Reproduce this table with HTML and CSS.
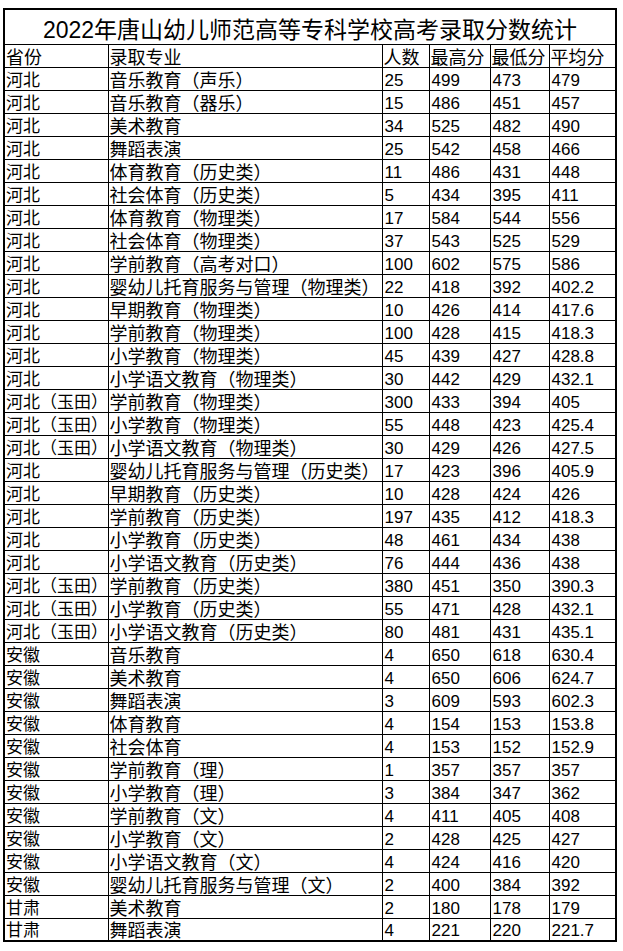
FILE: index.html
```html
<!DOCTYPE html>
<html lang="zh-CN">
<head>
<meta charset="utf-8">
<title>2022年唐山幼儿师范高等专科学校高考录取分数统计</title>
<link rel="stylesheet" href="styles.css">
</head>
<body>
<table class="sheet">
<colgroup>
<col class="c-prov"><col class="c-major"><col class="c-num"><col class="c-max"><col class="c-min"><col class="c-avg">
</colgroup>
<tbody>
<tr class="title-row"><td colspan="6" class="title">2022年唐山幼儿师范高等专科学校高考录取分数统计</td></tr>
<tr class="head"><td>省份</td><td>录取专业</td><td>人数</td><td>最高分</td><td>最低分</td><td>平均分</td></tr>
<tr><td>河北</td><td>音乐教育（声乐）</td><td>25</td><td>499</td><td>473</td><td>479</td></tr>
<tr><td>河北</td><td>音乐教育（器乐）</td><td>15</td><td>486</td><td>451</td><td>457</td></tr>
<tr><td>河北</td><td>美术教育</td><td>34</td><td>525</td><td>482</td><td>490</td></tr>
<tr><td>河北</td><td>舞蹈表演</td><td>25</td><td>542</td><td>458</td><td>466</td></tr>
<tr><td>河北</td><td>体育教育（历史类）</td><td>11</td><td>486</td><td>431</td><td>448</td></tr>
<tr><td>河北</td><td>社会体育（历史类）</td><td>5</td><td>434</td><td>395</td><td>411</td></tr>
<tr><td>河北</td><td>体育教育（物理类）</td><td>17</td><td>584</td><td>544</td><td>556</td></tr>
<tr><td>河北</td><td>社会体育（物理类）</td><td>37</td><td>543</td><td>525</td><td>529</td></tr>
<tr><td>河北</td><td>学前教育（高考对口）</td><td>100</td><td>602</td><td>575</td><td>586</td></tr>
<tr><td>河北</td><td>婴幼儿托育服务与管理（物理类）</td><td>22</td><td>418</td><td>392</td><td>402.2</td></tr>
<tr><td>河北</td><td>早期教育（物理类）</td><td>10</td><td>426</td><td>414</td><td>417.6</td></tr>
<tr><td>河北</td><td>学前教育（物理类）</td><td>100</td><td>428</td><td>415</td><td>418.3</td></tr>
<tr><td>河北</td><td>小学教育（物理类）</td><td>45</td><td>439</td><td>427</td><td>428.8</td></tr>
<tr><td>河北</td><td>小学语文教育（物理类）</td><td>30</td><td>442</td><td>429</td><td>432.1</td></tr>
<tr><td>河北（玉田）</td><td>学前教育（物理类）</td><td>300</td><td>433</td><td>394</td><td>405</td></tr>
<tr><td>河北（玉田）</td><td>小学教育（物理类）</td><td>55</td><td>448</td><td>423</td><td>425.4</td></tr>
<tr><td>河北（玉田）</td><td>小学语文教育（物理类）</td><td>30</td><td>429</td><td>426</td><td>427.5</td></tr>
<tr><td>河北</td><td>婴幼儿托育服务与管理（历史类）</td><td>17</td><td>423</td><td>396</td><td>405.9</td></tr>
<tr><td>河北</td><td>早期教育（历史类）</td><td>10</td><td>428</td><td>424</td><td>426</td></tr>
<tr><td>河北</td><td>学前教育（历史类）</td><td>197</td><td>435</td><td>412</td><td>418.3</td></tr>
<tr><td>河北</td><td>小学教育（历史类）</td><td>48</td><td>461</td><td>434</td><td>438</td></tr>
<tr><td>河北</td><td>小学语文教育（历史类）</td><td>76</td><td>444</td><td>436</td><td>438</td></tr>
<tr><td>河北（玉田）</td><td>学前教育（历史类）</td><td>380</td><td>451</td><td>350</td><td>390.3</td></tr>
<tr><td>河北（玉田）</td><td>小学教育（历史类）</td><td>55</td><td>471</td><td>428</td><td>432.1</td></tr>
<tr><td>河北（玉田）</td><td>小学语文教育（历史类）</td><td>80</td><td>481</td><td>431</td><td>435.1</td></tr>
<tr><td>安徽</td><td>音乐教育</td><td>4</td><td>650</td><td>618</td><td>630.4</td></tr>
<tr><td>安徽</td><td>美术教育</td><td>4</td><td>650</td><td>606</td><td>624.7</td></tr>
<tr><td>安徽</td><td>舞蹈表演</td><td>3</td><td>609</td><td>593</td><td>602.3</td></tr>
<tr><td>安徽</td><td>体育教育</td><td>4</td><td>154</td><td>153</td><td>153.8</td></tr>
<tr><td>安徽</td><td>社会体育</td><td>4</td><td>153</td><td>152</td><td>152.9</td></tr>
<tr><td>安徽</td><td>学前教育（理）</td><td>1</td><td>357</td><td>357</td><td>357</td></tr>
<tr><td>安徽</td><td>小学教育（理）</td><td>3</td><td>384</td><td>347</td><td>362</td></tr>
<tr><td>安徽</td><td>学前教育（文）</td><td>4</td><td>411</td><td>405</td><td>408</td></tr>
<tr><td>安徽</td><td>小学教育（文）</td><td>2</td><td>428</td><td>425</td><td>427</td></tr>
<tr><td>安徽</td><td>小学语文教育（文）</td><td>4</td><td>424</td><td>416</td><td>420</td></tr>
<tr><td>安徽</td><td>婴幼儿托育服务与管理（文）</td><td>2</td><td>400</td><td>384</td><td>392</td></tr>
<tr><td>甘肃</td><td>美术教育</td><td>2</td><td>180</td><td>178</td><td>179</td></tr>
<tr><td>甘肃</td><td>舞蹈表演</td><td>4</td><td>221</td><td>220</td><td>221.7</td></tr>
</tbody>
</table>
</body>
</html>
```
FILE: styles.css
```css
html, body {
  margin: 0;
  padding: 0;
  background: #fff;
}

.sheet {
  margin: 8px 0 0 3px;
  border-collapse: collapse;
  table-layout: fixed;
  width: 614px;
  border: 2px solid #000;
  font-family: "Liberation Sans", "Noto Sans CJK SC", sans-serif;
  font-size: 17px;
  color: #000;
}

.c-prov { width: 104px; }
.c-major { width: 274px; }
.c-num { width: 47px; }
.c-max { width: 61px; }
.c-min { width: 59px; }
.c-avg { width: 67px; }

.sheet tr {
  height: 23px;
}

.sheet td {
  border: 1px solid #000;
  padding: 0 0 0 2px;
  line-height: 18px;
  vertical-align: bottom;
  white-space: nowrap;
  overflow: hidden;
}

.sheet td:nth-child(1) {
  font-size: 17px;
  padding-left: 1px;
}

.sheet td:nth-child(2),
.sheet tr.head td {
  font-size: 18px;
  padding-left: 1px;
}

.sheet tr.title-row {
  height: 35px;
}

.sheet td.title {
  text-align: center;
  font-size: 23px;
  line-height: 26px;
  padding: 0 0 1px 0;
}
```
